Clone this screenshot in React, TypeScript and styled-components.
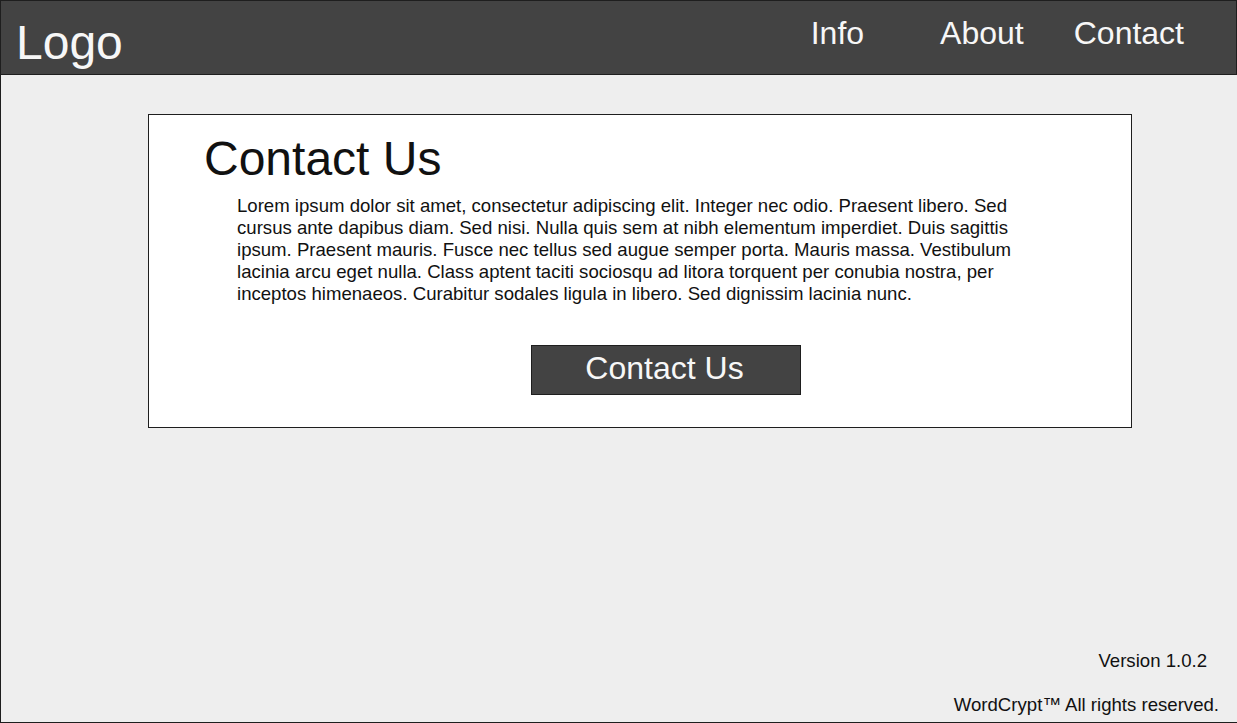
import styled, { createGlobalStyle } from "styled-components";

const GlobalStyle = createGlobalStyle`
  html, body {
    margin: 0;
    padding: 0;
    background: #eeeeee;
  }
  * {
    box-sizing: border-box;
  }
`;

const navItems = [
  { label: "Info", gap: 0 },
  { label: "About", gap: 76 },
  { label: "Contact", gap: 50 },
];

const lorem =
  "Lorem ipsum dolor sit amet, consectetur adipiscing elit. Integer nec odio. Praesent libero. Sed cursus ante dapibus diam. Sed nisi. Nulla quis sem at nibh elementum imperdiet. Duis sagittis ipsum. Praesent mauris. Fusce nec tellus sed augue semper porta. Mauris massa. Vestibulum lacinia arcu eget nulla. Class aptent taciti sociosqu ad litora torquent per conubia nostra, per inceptos himenaeos. Curabitur sodales ligula in libero. Sed dignissim lacinia nunc.";

const App = () => {
  return (
    <Frame>
      <GlobalStyle />
      <Header>
        <Logo>Logo</Logo>
        <Nav>
          {navItems.map((item) => (
            <NavLink key={item.label} $gap={item.gap}>
              {item.label}
            </NavLink>
          ))}
        </Nav>
      </Header>

      <Main>
        <Card>
          <Title>Contact Us</Title>
          <Body>{lorem}</Body>
          <ContactButton>Contact Us</ContactButton>
        </Card>
      </Main>

      <Footer>
        <FooterLine $right={30}>Version 1.0.2</FooterLine>
        <FooterLine $right={18}>WordCrypt™ All rights reserved.</FooterLine>
      </Footer>
    </Frame>
  );
};

export default App;

const Frame = styled.div`
  width: 1237px;
  height: 723px;
  display: flex;
  flex-direction: column;
  border-top: 1px solid #1e1e1e;
  border-left: 1px solid #1e1e1e;
  border-bottom: 1px solid #1e1e1e;
  background: #eeeeee;
  font-family: "Liberation Sans", Arial, sans-serif;
  color: #111111;
`;

const Header = styled.header`
  height: 74px;
  flex: none;
  display: flex;
  align-items: flex-start;
  justify-content: space-between;
  background: #434343;
  border-bottom: 1px solid #1e1e1e;
  border-right: 1px solid #1e1e1e;
  color: #f7f7f7;
`;

const Logo = styled.div`
  margin: 14px 0 0 15px;
  font-size: 48px;
  line-height: 56px;
`;

const Nav = styled.nav`
  display: flex;
  margin: 12px 52px 0 0;
`;

const NavLink = styled.div<{ $gap: number }>`
  margin-left: ${(p) => p.$gap}px;
  font-size: 32px;
  line-height: 40px;
  cursor: pointer;
`;

const Main = styled.main`
  flex: 1;
  padding: 39px 0 0 147px;
`;

const Card = styled.section`
  width: 984px;
  height: 314px;
  display: flex;
  flex-direction: column;
  align-items: flex-start;
  background: #ffffff;
  border: 1px solid #1e1e1e;
`;

const Title = styled.h1`
  margin: 16px 0 0 55px;
  font-size: 48px;
  line-height: 56px;
  font-weight: normal;
`;

const Body = styled.p`
  width: 790px;
  margin: 8px 0 0 88px;
  font-size: 18.6px;
  line-height: 22px;
`;

const ContactButton = styled.button`
  width: 270px;
  height: 50px;
  margin: 40px 0 0 382px;
  padding: 0 3px 4px 0;
  background: #434343;
  border: 1px solid #1e1e1e;
  border-radius: 0;
  color: #f7f7f7;
  font-family: inherit;
  font-size: 32px;
  line-height: 42px;
  cursor: pointer;
`;

const Footer = styled.footer`
  display: flex;
  flex-direction: column;
  align-items: flex-end;
  gap: 22px;
  padding-bottom: 6px;
`;

const FooterLine = styled.div<{ $right: number }>`
  margin-right: ${(p) => p.$right}px;
  font-size: 18.6px;
  line-height: 22px;
`;
